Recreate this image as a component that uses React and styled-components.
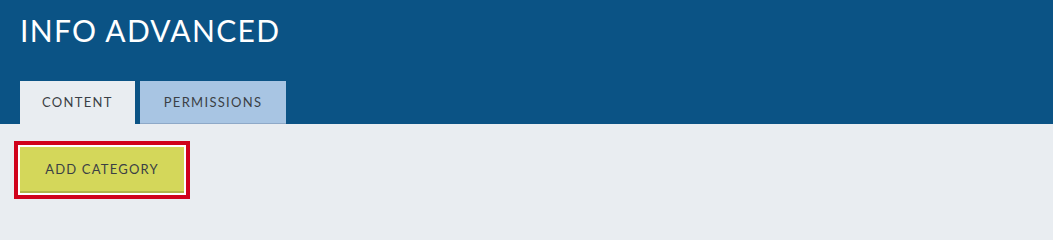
import React from "react";
import styled, { createGlobalStyle } from "styled-components";

const GlobalStyle = createGlobalStyle`
  html, body {
    margin: 0;
    padding: 0;
    background: #e9edf1;
    font-family: Lato, "Open Sans", "Liberation Sans", sans-serif;
  }
`;

const Page = styled.div`
  display: flex;
  flex-direction: column;
  height: 205px;
  overflow: hidden;
`;

const Header = styled.header`
  background: #0b5385;
  padding: 0 20px;
  height: 124px;
  flex-shrink: 0;
  display: flex;
  flex-direction: column;
  justify-content: space-between;
`;

const Title = styled.h1`
  margin: 13px 0 0;
  color: #fff;
  font-size: 30px;
  font-weight: 400;
  letter-spacing: 1.3px;
  line-height: 34px;
`;

const Tabs = styled.nav`
  display: flex;
  gap: 5px;
`;

const Tab = styled.button`
  height: 43px;
  padding: 0 ${(p) => (p.$active ? "22px" : "24px")};
  border: none;
  border-bottom: 1px solid ${(p) => (p.$active ? "#e9edf1" : "#8ea9c8")};
  background: ${(p) => (p.$active ? "#e9edf1" : "#a8c5e3")};
  color: #3b3f45;
  font-family: inherit;
  font-size: 13px;
  letter-spacing: 1.3px;
  text-transform: uppercase;
  cursor: pointer;
`;

const Content = styled.main`
  padding: 17px 14px 0;
  display: flex;
  align-items: flex-start;
`;

const Highlight = styled.div`
  display: flex;
  border: 4px solid #d0021b;
  background: #fff;
  padding: 2px;
`;

const Button = styled.button`
  width: 164px;
  height: 46px;
  border: none;
  border-bottom: 2px solid #b1b449;
  background: #d4d75a;
  color: #3b3f45;
  font-family: inherit;
  font-size: 13px;
  letter-spacing: 1.2px;
  text-transform: uppercase;
  cursor: pointer;
`;

export default function App() {
  return (
    <Page>
      <GlobalStyle />
      <Header>
        <Title>INFO ADVANCED</Title>
        <Tabs>
          <Tab $active>Content</Tab>
          <Tab>Permissions</Tab>
        </Tabs>
      </Header>
      <Content>
        <Highlight>
          <Button>Add Category</Button>
        </Highlight>
      </Content>
    </Page>
  );
}
